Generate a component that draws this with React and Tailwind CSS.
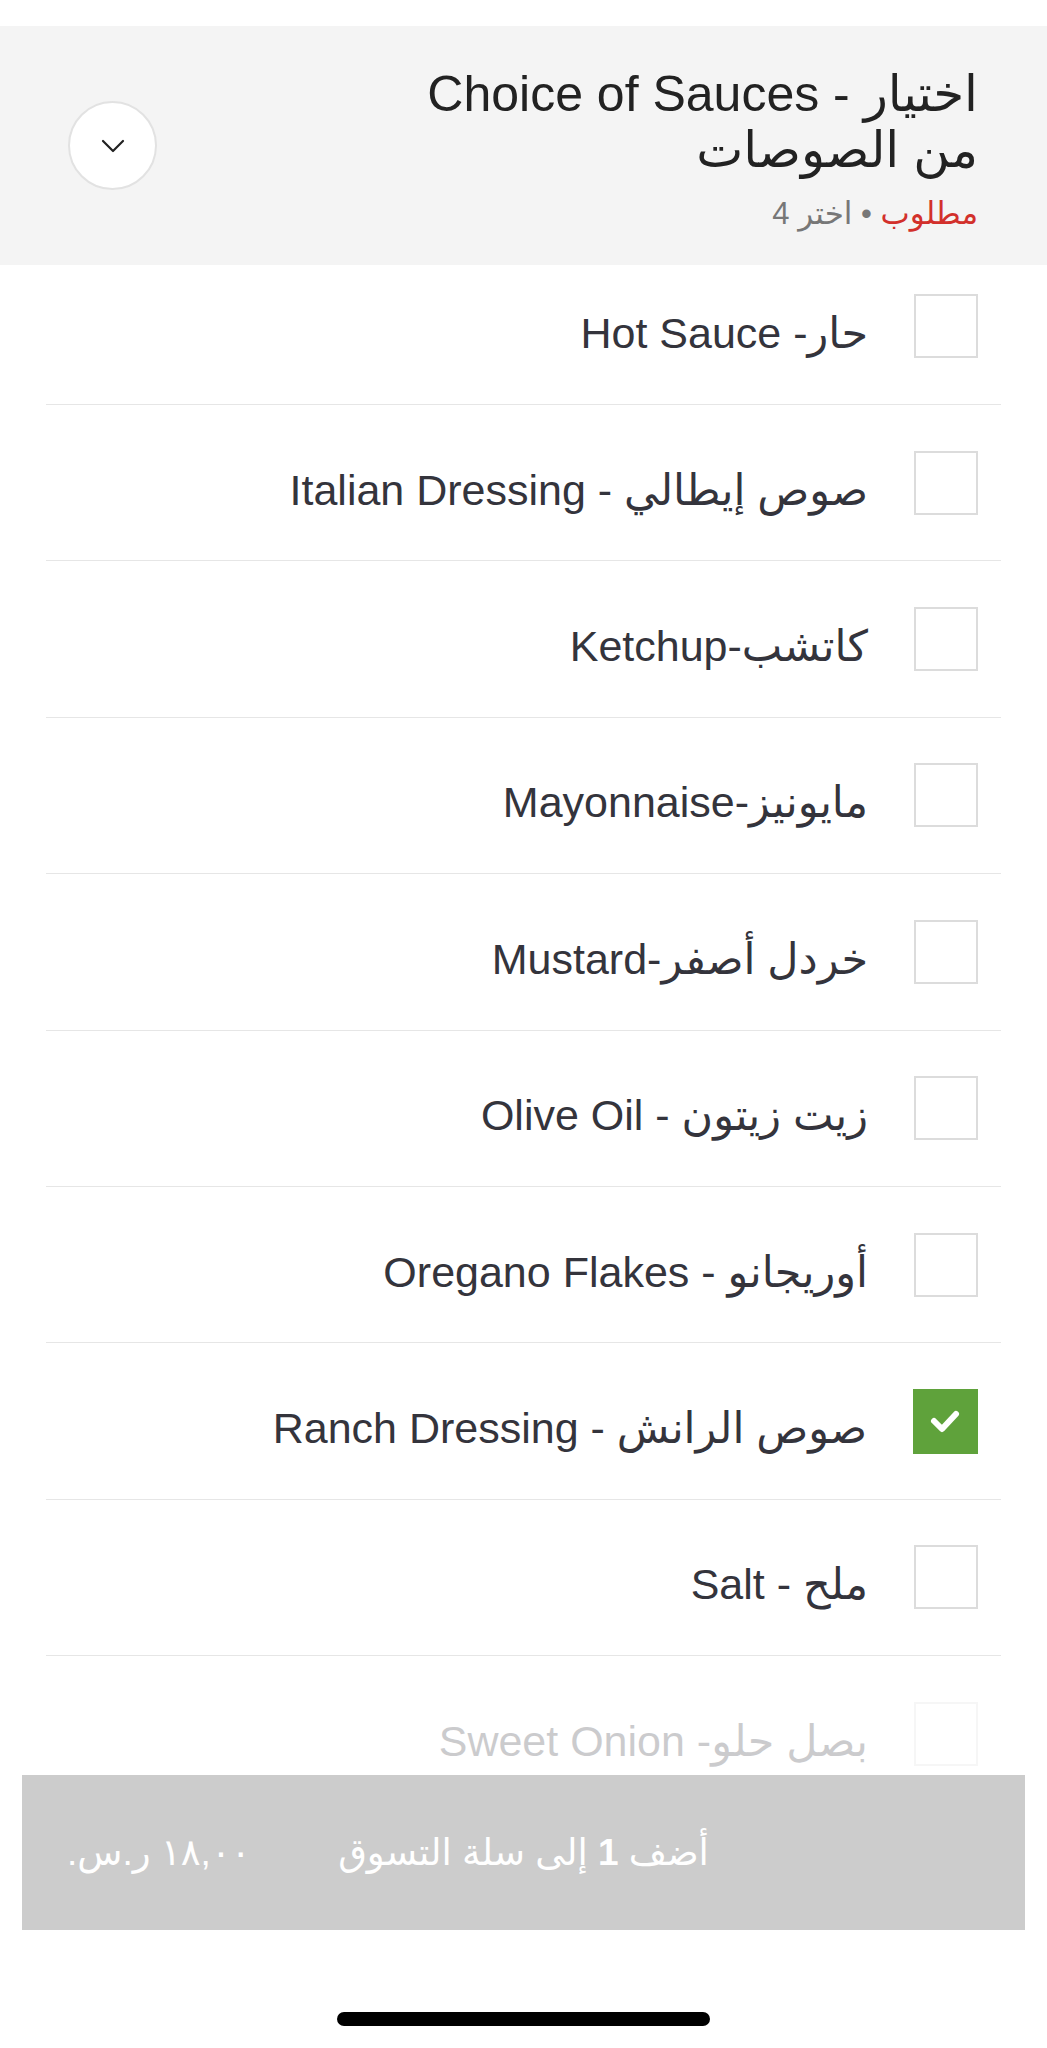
import React, { useState } from 'react';

const SAUCES = [
  'حار- Hot Sauce',
  'صوص إيطالي - Italian Dressing',
  'كاتشب-Ketchup',
  'مايونيز-Mayonnaise',
  'خردل أصفر-Mustard',
  'زيت زيتون - Olive Oil',
  'أوريجانو - Oregano Flakes',
  'صوص الرانش - Ranch Dressing',
  'ملح - Salt',
  'بصل حلو- Sweet Onion',
];

const Chevron = () => (
  <svg width="24" height="14" viewBox="0 0 24 14" fill="none">
    <path d="M2 2l10 10L22 2" stroke="#222" strokeWidth="2.2" strokeLinecap="round" strokeLinejoin="round" />
  </svg>
);

const Check = () => (
  <svg width="40" height="30" viewBox="0 0 40 30" fill="none">
    <path d="M8 15l8 8L30 8" stroke="#fff" strokeWidth="6" strokeLinecap="round" strokeLinejoin="round" />
  </svg>
);

const App = () => {
  const [selected, setSelected] = useState(['صوص الرانش - Ranch Dressing']);

  const toggle = (name) => {
    setSelected((s) => (s.includes(name) ? s.filter((n) => n !== name) : [...s, name]));
  };

  return (
    <div className="w-[1047px] h-[2048px] bg-white flex flex-col font-['Liberation_Sans','DejaVu_Sans',sans-serif] overflow-hidden">
      <div className="h-[26px] shrink-0" />

      {/* Header */}
      <div dir="rtl" className="relative z-10 h-[239px] shrink-0 bg-[#f4f4f4] flex items-center justify-between pr-[69px] pl-[68px]">
        <div className="flex flex-col pt-[8px]">
          <h1 className="text-[50px] leading-[56px] text-[#222] font-normal">
            اختيار - Choice of Sauces
            <br />
            من الصوصات
          </h1>
          <p className="text-[31px] leading-[40px] mt-[16px] text-[#777]">
            <span className="text-[#d2302b]">مطلوب</span> • اختر 4
          </p>
        </div>
        <button className="w-[89px] h-[89px] rounded-full bg-white border-2 border-[#e2e2e2] flex items-center justify-center">
          <Chevron />
        </button>
      </div>

      {/* Options list */}
      <div className="h-[1510px] shrink-0 overflow-hidden">
        <div className="-mt-[16.4px]">
          {SAUCES.map((name, idx) => {
            const checked = selected.includes(name);
            const faded = idx === SAUCES.length - 1;
            return (
              <div key={name} className="mx-[46px] h-[156.4px] border-b-[1.5px] border-[#e6e6e6]">
                <div
                  dir="rtl"
                  onClick={() => toggle(name)}
                  className={`h-full flex items-center gap-[46px] pr-[23px] cursor-pointer ${faded ? 'opacity-25' : ''}`}
                >
                  {checked ? (
                    <div className="w-[65px] h-[65px] shrink-0 bg-[#5fa23b] flex items-center justify-center">
                      <Check />
                    </div>
                  ) : (
                    <div className="w-[64px] h-[64px] shrink-0 border-[2.5px] border-[#dcdcdc] bg-white" />
                  )}
                  <span className="relative top-[7px] text-[43px] leading-[50px] text-[#34343c]">{name}</span>
                </div>
              </div>
            );
          })}
        </div>
      </div>

      {/* Add to cart */}
      <div className="px-[22px] shrink-0">
        <button dir="rtl" className="relative w-full h-[155px] bg-[#cccccc] flex items-center justify-center">
          <span className="text-[37px] text-white">
            أضف <span className="font-bold">1</span> إلى سلة التسوق
          </span>
          <span className="absolute left-[45px] top-1/2 -translate-y-1/2 text-[37px] text-white">
            <span className="tracking-[6px]">١٨,٠٠</span> ر.س.
          </span>
        </button>
      </div>

      {/* Home indicator */}
      <div className="flex-1 flex items-end justify-center pb-[22px]">
        <div className="w-[373px] h-[14px] rounded-full bg-black" />
      </div>
    </div>
  );
};

export default App;
